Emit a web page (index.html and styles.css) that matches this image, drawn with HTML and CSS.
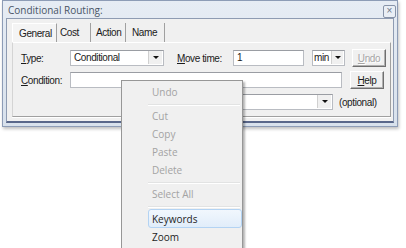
FILE: index.html
```html
<!DOCTYPE html>
<html lang="en">
<head>
    <meta charset="UTF-8">
    <title>Conditional Routing</title>
    <link rel="stylesheet" href="styles.css">
</head>
<body>
<div class="window">
    <div class="titlebar">
        <span class="title">Conditional Routing:</span>
        <span class="close">&#215;</span>
    </div>
    <div class="client">
        <div class="tabs">
            <span class="tab tab-active">General</span>
            <span class="tab tab-cost">Cost</span>
            <span class="tab tab-action">Action</span>
            <span class="tab tab-name">Name</span>
        </div>
        <div class="panel">
            <div class="row">
                <label class="label"><u>T</u>ype:</label>
                <div class="combo combo-type">
                    <span class="combo-text">Conditional</span>
                    <span class="arrow"></span>
                </div>
                <label class="label label-move"><u>M</u>ove time:</label>
                <div class="field field-time">1</div>
                <div class="combo combo-min">
                    <span class="combo-text">min</span>
                    <span class="arrow"></span>
                </div>
                <button class="btn btn-disabled"><u>U</u>ndo</button>
            </div>
            <div class="row">
                <label class="label"><u>C</u>ondition:</label>
                <div class="field field-cond"></div>
                <button class="btn"><u>H</u>elp</button>
            </div>
            <div class="row">
                <div class="spacer"></div>
                <div class="combo combo-kw">
                    <span class="combo-text"></span>
                    <span class="arrow"></span>
                </div>
                <span class="hint">(optional)</span>
            </div>
        </div>
    </div>
</div>

<div class="menu">
    <div class="item disabled">Undo</div>
    <div class="sep"></div>
    <div class="item disabled">Cut</div>
    <div class="item disabled">Copy</div>
    <div class="item disabled">Paste</div>
    <div class="item disabled">Delete</div>
    <div class="sep"></div>
    <div class="item disabled">Select All</div>
    <div class="sep"></div>
    <div class="item hover">Keywords</div>
    <div class="item">Zoom</div>
</div>
</body>
</html>
```

FILE: styles.css
```css
body {
    margin: 0;
    background: #ffffff;
    font-family: "Liberation Sans", Arial, sans-serif;
    font-size: 10px;
    letter-spacing: -0.4px;
    color: #1a1a1a;
    position: relative;
    height: 248px;
    overflow: hidden;
}

.window {
    box-sizing: border-box;
    width: 396px;
    height: 127px;
    margin-left: 2px;
    border: 1px solid #8d9cb6;
    background: linear-gradient(#e6ecf4, #d8e1ec);
    box-shadow: 1px 2px 3px rgba(0, 0, 0, 0.25);
}

.titlebar {
    height: 17px;
    display: flex;
    align-items: center;
    justify-content: space-between;
    padding: 0 1px 0 5px;
}

.title {
    font-family: "Open Sans", sans-serif;
    font-size: 10px;
    letter-spacing: 0;
    color: #4a5566;
}

.close {
    box-sizing: border-box;
    width: 13px;
    height: 13px;
    margin-top: 3px;
    border: 1px solid #8793a8;
    border-radius: 2px;
    background: #e9eef5;
    color: #6b7688;
    font-size: 10px;
    line-height: 10px;
    text-align: center;
    letter-spacing: 0;
}

.client {
    box-sizing: border-box;
    height: 105px;
    margin: 0 3px;
    background: #f0f0f0;
    border: 1px solid #8e9bb2;
    border-bottom: 2px solid #59678a;
}

.tabs {
    display: flex;
    height: 19px;
    margin: 4px 0 0 5px;
}

.tab {
    box-sizing: border-box;
    height: 19px;
    line-height: 19px;
    border-right: 1px solid #a0a0a0;
    padding-left: 6px;
}

.tab-active {
    width: 45px;
    border-left: 1px solid #ffffff;
    border-top: 1px solid #ffffff;
    background: #f4f4f4;
}

.tab-cost {
    width: 34px;
    padding-left: 3px;
}

.tab-action {
    width: 35px;
    padding-left: 5px;
}

.tab-name {
    width: 39px;
    padding-left: 6px;
}

.panel {
    box-sizing: border-box;
    width: 379px;
    height: 75px;
    margin-left: 5px;
    border-top: 1px solid #ffffff;
    border-left: 1px solid #d4d4d4;
    border-right: 1px solid #a0a0a0;
    border-bottom: 1px solid #a0a0a0;
    box-shadow: 0 1px 0 #ffffff;
    padding: 6px 0 0 8px;
}

.row {
    display: flex;
    align-items: center;
    height: 18px;
    margin-bottom: 4px;
}

.label {
    width: 49px;
}

.label-move {
    width: 56px;
    margin-left: 13px;
}

.field,
.combo {
    box-sizing: border-box;
    height: 16px;
    background: #ffffff;
    border: 1px solid #b9bcc2;
    border-top-color: #9a9da3;
    line-height: 14px;
    padding-left: 3px;
}

.field-time {
    width: 71px;
}

.field-cond {
    width: 272px;
}

.combo {
    display: flex;
    justify-content: space-between;
    padding-right: 1px;
}

.combo-type {
    width: 94px;
}

.combo-min {
    width: 33px;
    margin-left: 8px;
    padding-left: 1px;
}

.combo-min .arrow {
    width: 12px;
}

.combo-kw {
    width: 203px;
}

.arrow {
    box-sizing: border-box;
    width: 14px;
    height: 13px;
    background: #f0f0f0;
    border-left: 1px solid #d0d0d0;
    position: relative;
}

.arrow::after {
    content: "";
    position: absolute;
    left: 50%;
    top: 5px;
    margin-left: -3px;
    border-left: 3px solid transparent;
    border-right: 3px solid transparent;
    border-top: 3px solid #111111;
}

.btn {
    box-sizing: border-box;
    width: 34px;
    height: 18px;
    margin-left: 7px;
    padding: 0;
    background: #f0f0f0;
    border: 1px solid;
    border-color: #ffffff #6f6f6f #6f6f6f #ffffff;
    box-shadow: inset -1px -1px 0 #b0b0b0;
    font-family: "Liberation Sans", Arial, sans-serif;
    font-size: 10px;
    letter-spacing: -0.4px;
    color: #1a1a1a;
}

.field-cond + .btn {
    margin-left: 8px;
}

.btn-disabled {
    color: #a6a6a6;
    text-shadow: 1px 1px 0 #ffffff;
}

.spacer {
    width: 109px;
}

.hint {
    margin-left: 6px;
}

.menu {
    position: absolute;
    left: 121px;
    top: 80px;
    width: 122px;
    height: 168px;
    box-sizing: border-box;
    padding: 2px 0 0 2px;
    background: #f0f0f0;
    border: 1px solid #979797;
    border-bottom: none;
    box-shadow: 2px 2px 2px rgba(0, 0, 0, 0.3);
    font-family: "Open Sans", sans-serif;
    font-size: 10px;
    letter-spacing: 0;
    overflow: hidden;
}

.item {
    box-sizing: border-box;
    height: 18px;
    line-height: 17px;
    margin-left: 24px;
    padding-left: 3px;
    border: 1px solid transparent;
    border-radius: 3px;
    color: #1e1e1e;
}

.item.disabled {
    color: #a3a3a3;
}

.item.hover {
    height: 19px;
    line-height: 18px;
    border-color: #b3d3f3;
    background: linear-gradient(#f1f7fd, #e1edfa);
}

.sep {
    height: 6px;
    margin-left: 24px;
    margin-right: 2px;
    box-sizing: border-box;
    border-top: 3px solid transparent;
    background: linear-gradient(#e2e3e3 1px, #ffffff 1px, #ffffff 2px, transparent 2px);
    background-clip: content-box;
}
```
